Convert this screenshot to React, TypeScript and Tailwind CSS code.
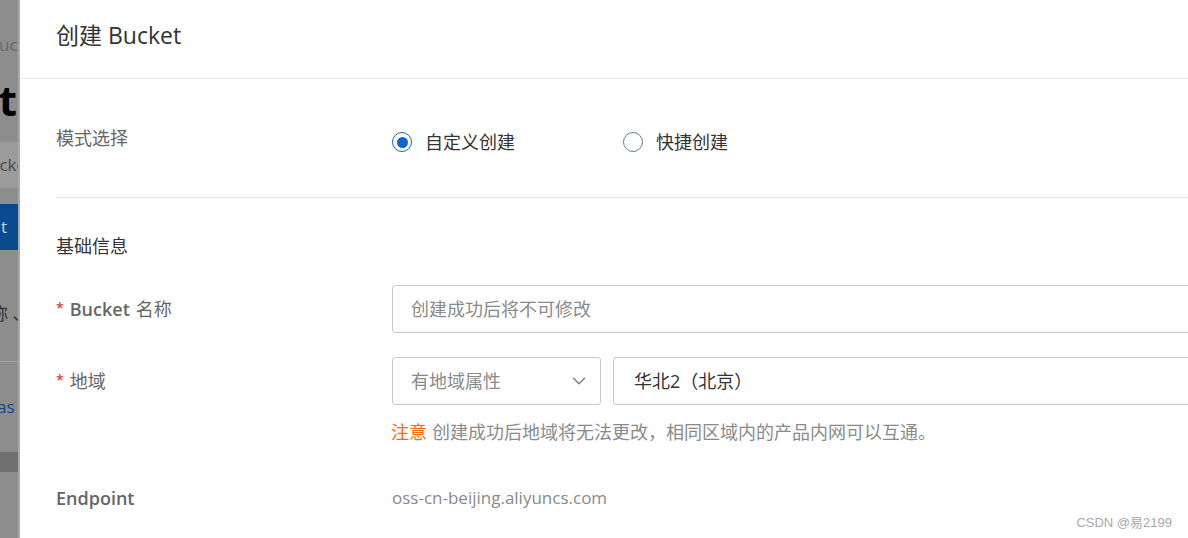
import { ChevronDown } from "lucide-react"

const font = { fontFamily: '"Open Sans", "Noto Sans CJK SC", sans-serif' }

const Radio = ({ checked, label }: { checked?: boolean; label: string }) => (
  <label className="flex items-center gap-[13px] cursor-pointer">
    <span
      className={
        checked
          ? "w-5 h-5 rounded-full border border-[#1b62b4] flex items-center justify-center"
          : "w-5 h-5 rounded-full border border-[#5b7ea6]"
      }
    >
      {checked && <span className="w-[11px] h-[11px] rounded-full bg-[#0868d0]" />}
    </span>
    <span className="text-[18px] text-[#333]">{label}</span>
  </label>
)

const Label = ({ children, required }: { children: React.ReactNode; required?: boolean }) => (
  <div className="w-[336px] shrink-0 flex items-center text-[18px] text-[#666]">
    {required && <span className="text-[#e02020] text-[14px] mr-[6px] -mt-1">*</span>}
    {children}
  </div>
)

const BackdropStrip = () => (
  <div className="w-5 shrink-0 h-full bg-[#8d8d8d] overflow-hidden flex flex-col relative">
    <div className="h-[32px]" />
    <div className="h-[26px] text-[17px] text-[#6a6a6a] whitespace-nowrap -ml-[12px] leading-[26px]">Bucket</div>
    <div className="h-[84px] flex items-center justify-end pr-[3px] text-[42px] font-bold text-black leading-none">t</div>
    <div className="h-[46px] bg-[#9b9b9b] flex items-center text-[17px] text-[#4a4a4a] whitespace-nowrap -ml-[22px]">
      <span>Bucket</span>
    </div>
    <div className="h-[16px]" />
    <div className="h-[46px] bg-[#0a4a8e] flex items-center whitespace-nowrap pl-[1px] text-[17px] text-[#c9d6e6]">t</div>
    <div className="h-[40px]" />
    <div className="h-[48px] flex items-center whitespace-nowrap text-[17px] text-[#333] -ml-[9px]">称 、</div>
    <div className="h-[24px] border-b border-[#a2a2a2]" />
    <div className="h-[90px] flex items-center whitespace-nowrap text-[17px] text-[#11457f] -ml-[3px]">as</div>
    <div className="h-[20px] bg-[#707070]" />
    <div className="flex-1" />
    <div className="absolute right-0 top-0 h-full w-[2px] bg-[#a9a9a9]" />
  </div>
)

export default function App() {
  return (
    <div className="w-full h-[538px] flex overflow-hidden bg-white relative" style={font}>
      <BackdropStrip />
      <div className="flex-1 h-full bg-white flex flex-col overflow-hidden">
        <div className="h-[79px] shrink-0 border-b border-[#e6e6e6] flex items-center px-[36px] pb-[8px]">
          <h1 className="text-[23px] text-[#333]">创建 Bucket</h1>
        </div>
        <div className="pl-[36px] -mr-6 flex flex-col">
          <div className="h-[118px] flex items-center">
            <Label>模式选择</Label>
            <div className="flex items-center pt-[8px]">
              <div className="w-[231px]">
                <Radio checked label="自定义创建" />
              </div>
              <Radio label="快捷创建" />
            </div>
          </div>
          <div className="border-t border-[#e3e3e3]" />
          <div className="mt-[35px] h-[26px] leading-[26px] text-[18px] text-[#333]">基础信息</div>
          <div className="mt-[26px] flex items-center h-[48px]">
            <Label required>
              <span className="font-semibold">Bucket</span>
              <span className="ml-[6px]">名称</span>
            </Label>
            <input
              className="flex-1 h-[48px] border border-[#c6c9ce] rounded-[3px] px-[18px] text-[18px] text-[#333] placeholder:text-[#8a8a8a] outline-none"
              placeholder="创建成功后将不可修改"
            />
          </div>
          <div className="mt-[24px] flex items-center h-[48px]">
            <Label required>地域</Label>
            <div className="flex-1 flex gap-[12px]">
              <div className="w-[209px] h-[48px] border border-[#c6c9ce] rounded-[3px] flex items-center justify-between pl-[18px] pr-[10px] text-[18px] text-[#8a8a8a]">
                <span>有地域属性</span>
                <ChevronDown className="w-[22px] h-[22px] text-[#7a7a7a]" strokeWidth={1.5} />
              </div>
              <div className="flex-1 h-[48px] border border-[#c6c9ce] rounded-[3px] flex items-center pl-[20px] text-[18px] text-[#333]">
                华北2（北京）
              </div>
            </div>
          </div>
          <div className="mt-[14px] flex h-[26px] leading-[26px]">
            <div className="w-[335px] shrink-0" />
            <span className="text-[18px] text-[#ff6a00]">注意</span>
            <span className="ml-[5px] text-[18px] text-[#8a8a8a]">创建成功后地域将无法更改，相同区域内的产品内网可以互通。</span>
          </div>
          <div className="mt-[40px] flex items-center h-[26px]">
            <Label>
              <span className="font-semibold">Endpoint</span>
            </Label>
            <span className="text-[17px] text-[#8a8a8a]">oss-cn-beijing.aliyuncs.com</span>
          </div>
        </div>
      </div>
      <div className="absolute right-[16px] bottom-[6px] text-[13px] text-[#a8a8a8]" style={{ fontFamily: '"Liberation Sans", "Noto Sans CJK SC", sans-serif' }}>
        CSDN @易2199
      </div>
    </div>
  )
}
